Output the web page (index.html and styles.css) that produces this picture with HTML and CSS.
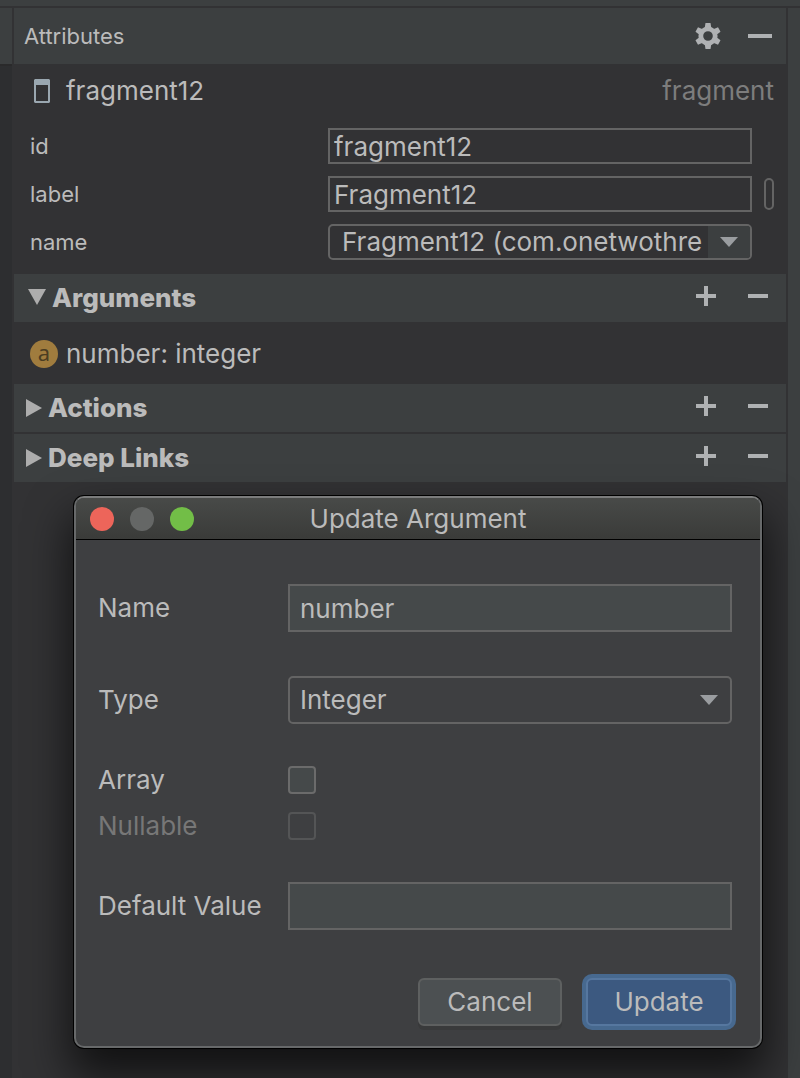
FILE: index.html
```html
<!DOCTYPE html>
<html lang="en">
  <head>
    <meta charset="UTF-8" />
    <meta name="viewport" content="width=device-width, initial-scale=1.0" />
    <title>Attributes</title>
    <link rel="stylesheet" href="styles.css">
  </head>
  <body>
    <div class="toolbar"></div>
    <div class="workspace">
      <div class="left_rail">
        <div class="left_rail_head"></div>
      </div>

      <main class="panel">
        <header class="panel_head">
          <h1 class="panel_title">Attributes</h1>
          <button class="icon_button" aria-label="Settings">
            <svg width="28" height="28" viewBox="0 0 28 28">
              <circle cx="14" cy="14" r="7.200" fill="none" stroke="#afb1b3" stroke-width="4.800" />
              <g fill="#afb1b3">
                <path d="M11.500 1h5l.8 5h-6.600z" />
                <path d="M11.500 1h5l.8 5h-6.600z" transform="rotate(60 14 14)" />
                <path d="M11.500 1h5l.8 5h-6.600z" transform="rotate(120 14 14)" />
                <path d="M11.500 1h5l.8 5h-6.600z" transform="rotate(180 14 14)" />
                <path d="M11.500 1h5l.8 5h-6.600z" transform="rotate(240 14 14)" />
                <path d="M11.500 1h5l.8 5h-6.600z" transform="rotate(300 14 14)" />
              </g>
            </svg>
          </button>
          <button class="icon_button" aria-label="Hide">
            <svg width="28" height="28" viewBox="0 0 28 28">
              <rect x="2" y="12" width="24" height="4" fill="#afb1b3" />
            </svg>
          </button>
        </header>

        <div class="component">
          <svg width="16" height="24" viewBox="0 0 16 24">
            <path
              fill="#9aa7b0"
              fill-rule="evenodd"
              d="M1 0h14l1 1v22l-1 1H1l-1-1V1zM2 6v16h12V6z"
            />
          </svg>
          <span class="component_name">fragment12</span>
          <span class="component_type">fragment</span>
        </div>

        <div class="props">
          <div class="prop">
            <label class="prop_label" for="prop_id">id</label>
            <input class="prop_input" id="prop_id" type="text" value="fragment12" />
          </div>
          <div class="prop">
            <label class="prop_label" for="prop_label">label</label>
            <input class="prop_input" id="prop_label" type="text" value="Fragment12" />
            <button class="pill" aria-label="Pick a resource"></button>
          </div>
          <div class="prop">
            <label class="prop_label" for="prop_name">name</label>
            <div class="prop_select">
              <select id="prop_name">
                <option>Fragment12 (com.onetwothre</option>
              </select>
              <span class="prop_arrow">
                <svg width="18" height="10" viewBox="0 0 18 10">
                  <path fill="#9a9da0" d="M0 0h18l-9 10z" />
                </svg>
              </span>
            </div>
          </div>
        </div>

        <section class="section_head">
          <button class="toggle" aria-expanded="true">
            <svg width="20" height="18" viewBox="0 0 20 18">
              <path fill="#adadad" d="M2 0h18l-9 16z" />
            </svg>
            Arguments
          </button>
          <button class="icon_button" aria-label="Add argument">
            <svg width="28" height="28" viewBox="0 0 28 28">
              <path fill="#afb1b3" d="M12 4h4v8h8v4h-8v8h-4v-8H4v-4h8z" />
            </svg>
          </button>
          <button class="icon_button" aria-label="Remove argument">
            <svg width="28" height="28" viewBox="0 0 28 28">
              <rect x="4" y="12" width="20" height="4" fill="#afb1b3" />
            </svg>
          </button>
        </section>
        <div class="argument">
          <span class="argument_icon">a</span>
          <span>number: integer</span>
        </div>

        <section class="section_head">
          <button class="toggle" aria-expanded="false">
            <svg width="16" height="18" viewBox="0 0 16 18">
              <path fill="#adadad" d="M0 0v18l16-9z" />
            </svg>
            Actions
          </button>
          <button class="icon_button" aria-label="Add action">
            <svg width="28" height="28" viewBox="0 0 28 28">
              <path fill="#afb1b3" d="M12 4h4v8h8v4h-8v8h-4v-8H4v-4h8z" />
            </svg>
          </button>
          <button class="icon_button" aria-label="Remove action">
            <svg width="28" height="28" viewBox="0 0 28 28">
              <rect x="4" y="12" width="20" height="4" fill="#afb1b3" />
            </svg>
          </button>
        </section>

        <section class="section_head section_divided">
          <button class="toggle" aria-expanded="false">
            <svg width="16" height="18" viewBox="0 0 16 18">
              <path fill="#adadad" d="M0 0v18l16-9z" />
            </svg>
            Deep Links
          </button>
          <button class="icon_button" aria-label="Add deep link">
            <svg width="28" height="28" viewBox="0 0 28 28">
              <path fill="#afb1b3" d="M12 4h4v8h8v4h-8v8h-4v-8H4v-4h8z" />
            </svg>
          </button>
          <button class="icon_button" aria-label="Remove deep link">
            <svg width="28" height="28" viewBox="0 0 28 28">
              <rect x="4" y="12" width="20" height="4" fill="#afb1b3" />
            </svg>
          </button>
        </section>
      </main>

      <div class="right_rail"></div>
    </div>

    <form class="dialog" role="dialog" aria-labelledby="dialog_title">
      <div class="dialog_head">
        <div class="lights">
          <button class="light red" type="button" aria-label="Close"></button>
          <button class="light grey" type="button" aria-label="Minimize" disabled></button>
          <button class="light green" type="button" aria-label="Zoom"></button>
        </div>
        <h2 class="dialog_title" id="dialog_title">Update Argument</h2>
      </div>

      <div class="dialog_body">
        <div class="field">
          <label for="arg_name">Name</label>
          <input class="field_input" id="arg_name" type="text" value="number" />
        </div>
        <div class="field">
          <label for="arg_type">Type</label>
          <div class="field_select">
            <select id="arg_type">
              <option>Integer</option>
            </select>
            <svg class="field_arrow" width="18" height="10" viewBox="0 0 18 10">
              <path fill="#9a9da0" d="M0 0h18l-9 10z" />
            </svg>
          </div>
        </div>
        <div class="checks">
          <div class="field">
            <label for="arg_array">Array</label>
            <input class="check" id="arg_array" type="checkbox" />
          </div>
          <div class="field">
            <label class="disabled" for="arg_nullable">Nullable</label>
            <input class="check" id="arg_nullable" type="checkbox" disabled />
          </div>
        </div>
        <div class="field">
          <label for="arg_default">Default Value</label>
          <input class="field_input" id="arg_default" type="text" />
        </div>
        <div class="actions">
          <button class="btn" type="button">Cancel</button>
          <button class="btn btn_primary" type="submit">Update</button>
        </div>
      </div>
    </form>
  </body>
</html>
```
FILE: styles.css
```css
* {
  box-sizing: border-box;
}
body {
  display: flex;
  flex-direction: column;
  position: relative;
  min-height: 100vh;
  margin: 0;
  background: #323234;
  color: #bbbbbb;
  font-family: Inter, "Liberation Sans", sans-serif;
  font-size: 26px;
  line-height: 32px;
}
h1,
h2 {
  margin: 0;
  font-weight: 400;
}
button,
input,
select {
  margin: 0;
  padding: 0;
  border: none;
  background: none;
  color: inherit;
  font: inherit;
}
svg {
  display: block;
  flex: none;
}
.toolbar {
  height: 8px;
  background: #3c3f40;
  border-bottom: 2px solid #323234;
}
.workspace {
  display: flex;
  flex: 1;
}
.left_rail {
  width: 12px;
  background: #2d2e30;
}
.left_rail_head {
  height: 58px;
  background: #3c3f40;
  border-bottom: 2px solid #2a2a2b;
}
.panel {
  flex: 1;
  min-width: 0;
  padding: 0 2px;
}
.right_rail {
  width: 12px;
  background: #3c3f40;
}
.panel_head {
  display: flex;
  align-items: center;
  gap: 24px;
  height: 56px;
  padding: 0 12px 0 10px;
  background: #3c3f40;
}
.panel_title {
  flex: 1;
  font-size: 22px;
}
.icon_button {
  width: 28px;
  height: 28px;
}
.component {
  display: flex;
  align-items: center;
  height: 54px;
  padding: 0 12px 0 20px;
}
.component_name {
  flex: 1;
  margin-left: 16px;
}
.component_type {
  color: #7d7d7d;
}
.props {
  padding: 4px 34px 8px 16px;
}
.prop {
  display: flex;
  align-items: center;
  height: 48px;
}
.prop_label {
  flex: none;
  width: 298px;
  font-size: 22px;
}
.prop_input {
  flex: 1;
  min-width: 0;
  height: 36px;
  padding: 0 4px;
  border: 2px solid #646464;
}
.pill {
  width: 10px;
  height: 32px;
  margin: 0 -22px 0 12px;
  border: 2px solid #646464;
  border-radius: 5px;
}
.prop_select {
  display: flex;
  flex: 1;
  min-width: 0;
  height: 36px;
  border: 2px solid #646464;
  border-radius: 5px;
  overflow: hidden;
}
.prop_select select {
  appearance: none;
  flex: 1;
  min-width: 0;
  padding-left: 12px;
}
.prop_arrow {
  display: flex;
  flex: none;
  align-items: center;
  justify-content: center;
  width: 42px;
  background: #3c3f40;
}
.section_head {
  display: flex;
  align-items: center;
  gap: 24px;
  height: 48px;
  padding: 0 14px 4px 12px;
  background: #3c3f40;
}
.section_divided {
  margin-top: 2px;
}
.toggle {
  display: flex;
  align-items: center;
  flex: 1;
  gap: 6px;
  padding-top: 4px;
  font-weight: 800;
  text-align: left;
}
.argument {
  display: flex;
  align-items: center;
  gap: 8px;
  height: 62px;
  padding: 2px 16px 0;
}
.argument_icon {
  width: 28px;
  height: 28px;
  border-radius: 50%;
  background: #a07c3e;
  color: #4b3d22;
  font-family: "Noto Sans", sans-serif;
  font-size: 22px;
  line-height: 25px;
  text-align: center;
}

.dialog {
  position: absolute;
  top: 496px;
  left: 74px;
  right: 38px;
  border: 2px solid #67696a;
  border-top-color: #7b7c7c;
  border-radius: 10px;
  background: #3e3f41;
  box-shadow: 0 0 0 1px #000, 0 24px 44px 4px rgba(0, 0, 0, 0.65);
}
.dialog_head {
  display: grid;
  grid-template-columns: 1fr auto 1fr;
  align-items: center;
  height: 42px;
  padding: 0 14px;
  border-bottom: 1px solid #000;
  border-radius: 8px 8px 0 0;
  background: linear-gradient(#484a48, #3a3b39);
}
.lights {
  display: flex;
  gap: 16px;
}
.light {
  width: 24px;
  height: 24px;
  border-radius: 50%;
}
.red {
  background: #ed655a;
}
.grey {
  background: #656766;
}
.green {
  background: #72be47;
}
.dialog_title {
  font-size: 26px;
}
.dialog_body {
  display: flex;
  flex-direction: column;
  padding: 44px 28px 20px 22px;
}
.field {
  display: grid;
  grid-template-columns: 190px 1fr;
  align-items: center;
  margin-bottom: 44px;
}
.field_input {
  width: 100%;
  height: 48px;
  padding: 0 10px;
  border: 2px solid #646464;
  background: #45494a;
}
.field_select {
  display: grid;
  align-items: center;
  height: 48px;
  border: 2px solid #646464;
  border-radius: 5px;
}
.field_select select {
  appearance: none;
  grid-area: 1 / 1;
  height: 44px;
  padding: 0 44px 0 10px;
}
.field_arrow {
  grid-area: 1 / 1;
  justify-self: end;
  margin-right: 12px;
  pointer-events: none;
}
.checks {
  display: grid;
  gap: 18px;
  margin: -2px 0 42px;
  line-height: 28px;
}
.checks .field {
  margin-bottom: 0;
}
.check {
  appearance: none;
  width: 28px;
  height: 28px;
  border: 2px solid #6b6b6b;
  border-radius: 4px;
  background: #45494a;
}
.check:disabled {
  border-color: #545556;
  background: none;
}
.disabled {
  color: #777777;
}
.actions {
  display: flex;
  justify-content: flex-end;
  gap: 24px;
  margin-top: 4px;
}
.btn {
  width: 144px;
  height: 48px;
  border: 2px solid #5e6060;
  border-radius: 6px;
  background: #4c5052;
  box-shadow: 0 4px 0 #393a3b;
}
.btn_primary {
  width: 146px;
  border-color: #56779f;
  background: #3c5980;
  box-shadow: 0 0 0 4px #47698f;
}
```
